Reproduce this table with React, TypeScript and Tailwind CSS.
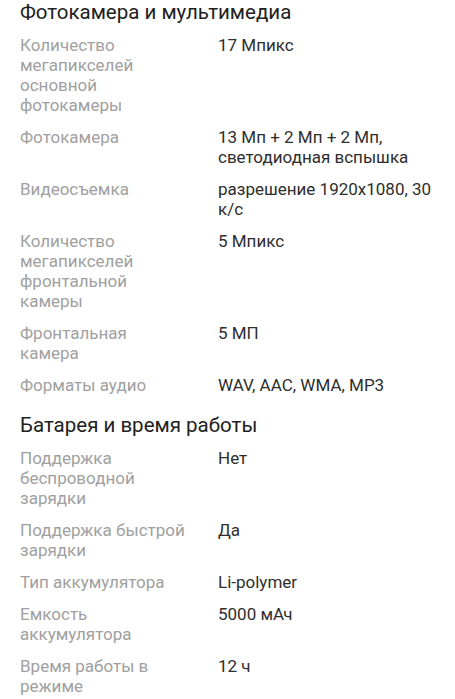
import React from 'react';

type Spec = { label: string; value: string };

const camera: Spec[] = [
  { label: 'Количество мегапикселей основной фотокамеры', value: '17 Мпикс' },
  { label: 'Фотокамера', value: '13 Мп + 2 Мп + 2 Мп, светодиодная вспышка' },
  { label: 'Видеосъемка', value: 'разрешение 1920x1080, 30 к/с' },
  { label: 'Количество мегапикселей фронтальной камеры', value: '5 Мпикс' },
  { label: 'Фронтальная камера', value: '5 МП' },
  { label: 'Форматы аудио', value: 'WAV, AAC, WMA, MP3' },
];

const battery: Spec[] = [
  { label: 'Поддержка беспроводной зарядки', value: 'Нет' },
  { label: 'Поддержка быстрой зарядки', value: 'Да' },
  { label: 'Тип аккумулятора', value: 'Li-polymer' },
  { label: 'Емкость аккумулятора', value: '5000 мАч' },
  { label: 'Время работы в режиме', value: '12 ч' },
];

// одна строка характеристики
const SpecRow = ({ label, value }: Spec) => (
  <div className="flex gap-[30px] pb-3 text-[17px] leading-[20px]">
    <div className="w-[168px] shrink-0 text-[#a0a0a0]">{label}</div>
    <div className="flex-1 text-[#2e2e2e]">{value}</div>
  </div>
);

const Section = ({ title, items }: { title: string; items: Spec[] }) => (
  <section>
    <h2 className="text-[20.5px] leading-[24px] text-[#212121] pb-[11px]">{title}</h2>
    {items.map((s) => (
      <SpecRow key={s.label} {...s} />
    ))}
  </section>
);

export default function App() {
  return (
    <div
      className="h-[699px] overflow-hidden bg-white px-5"
      style={{ fontFamily: 'Roboto, "Noto Sans", sans-serif' }}
    >
      <Section title="Фотокамера и мультимедиа" items={camera} />
      <div className="pt-[6px]">
        <Section title="Батарея и время работы" items={battery} />
      </div>
    </div>
  );
}
